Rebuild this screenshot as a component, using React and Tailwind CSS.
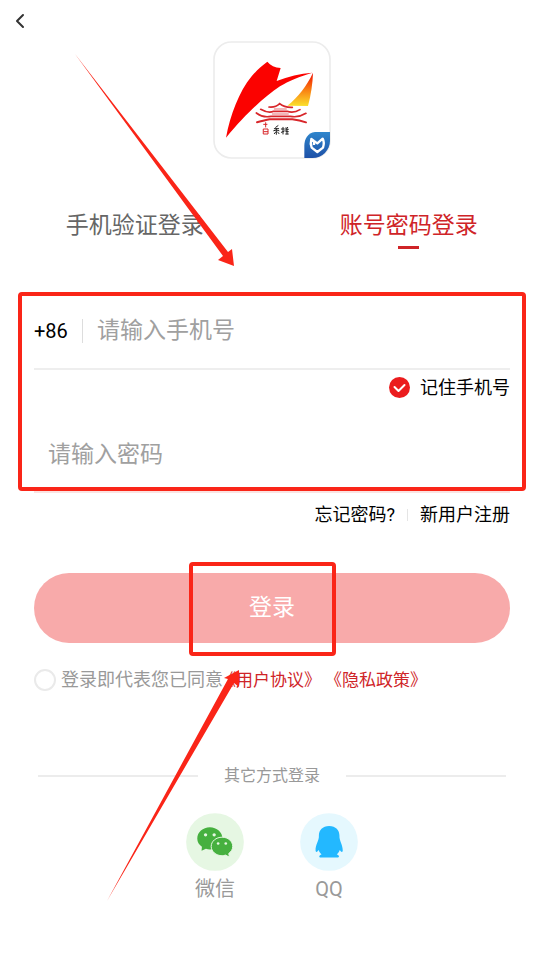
import { ChevronLeft } from "lucide-react";

function AppLogo() {
  return (
    <svg viewBox="24 18 354 354" className="mx-auto block size-[118px]" role="img" aria-label="App logo">
      <defs>
        <linearGradient id="flame" x1="0" y1="0" x2="0" y2="1">
          <stop offset="0" stopColor="#f00a00" />
          <stop offset="0.5" stopColor="#f97c12" />
          <stop offset="1" stopColor="#fbe02c" />
        </linearGradient>
        <linearGradient id="badge" x1="0" y1="0" x2="0" y2="1">
          <stop offset="0" stopColor="#2f86cc" />
          <stop offset="1" stopColor="#1d4fa6" />
        </linearGradient>
        <clipPath id="tile">
          <rect x="27" y="21" width="348" height="348" rx="52" />
        </clipPath>
      </defs>
      <rect x="27" y="21" width="348" height="348" rx="52" fill="#fff" stroke="#ececec" strokeWidth="5" />
      <path d="M63 308C76 240 102 170 140 124C155 106 170 92 187 80C196 91 210 98 227 99L215 138C250 124 285 116 322 113C285 124 250 138 225 154C180 184 128 230 63 308Z" fill="#fb0200" />
      <path d="M324 113C323 145 318 180 309 213L247 212C280 186 305 153 324 113Z" fill="url(#flame)" />
      <g fill="none" stroke="#d8262a" strokeLinecap="round">
        <path d="M192 216Q212 218 224 206Q238 218 262 217" strokeWidth="5" />
        <path d="M167 223Q190 236 206 229H246Q266 236 285 224" strokeWidth="5" />
        <path d="M154 234Q174 249 198 244H256Q280 249 303 235" strokeWidth="5" />
        <path d="M156 262Q180 256 194 253H262Q284 256 303 262" strokeWidth="6" />
        <path d="M208 222H244M202 237H250" strokeWidth="2" />
        <path d="M176 268H186M182 263V276M176 282H189V297H176ZM177 290H188" strokeWidth="3" />
      </g>
      <g fill="none" stroke="#222" strokeWidth="3" strokeLinecap="round">
        <path d="M212 277L219 272M208 281H221M206 287Q214 282 222 287M214 281V298M208 296L212 291M218 291L222 296" />
        <path d="M229 282H238M234 277V297M229 292L238 288M243 278V288M248 277L244 283H250M243 290H250M246 284V297M242 297H250" />
      </g>
      <g clipPath="url(#tile)">
        <path d="M375 291H330C308 294 298 312 298 332V371H375Z" fill="url(#badge)" />
      </g>
      <path d="M327 318L319 312Q315 326 320 338L337 351L354 338Q359 322 353 311L337 325L327 318V330" fill="none" stroke="#fff" strokeWidth="7" strokeLinejoin="round" />
    </svg>
  );
}

function WechatIcon() {
  return (
    <svg viewBox="48 188 175 175" className="size-[58px]" aria-hidden="true">
      <circle cx="135.500" cy="275.500" r="87" fill="#e6f7e3" />
      <path d="M120 231C99 231 82 246 82 265C82 275 87 284 96 290L95 302L108 296Q114 298 120 298C141 298 158 283 158 265C158 246 141 231 120 231Z" fill="#46b03f" />
      <path d="M157 261C175 261 189 273 189 289C189 298 184 305 177 310L179 321L167 315Q162 317 157 317C139 317 124 304 124 289C124 273 139 261 157 261Z" fill="#46b03f" stroke="#e6f7e3" strokeWidth="3" />
      <g fill="#e6f7e3">
        <circle cx="107" cy="254" r="5" />
        <circle cx="133" cy="254" r="5" />
        <circle cx="145" cy="280" r="4" />
        <circle cx="168" cy="280" r="4" />
      </g>
    </svg>
  );
}

function QqIcon() {
  return (
    <svg viewBox="389 188 175 175" className="size-[58px]" aria-hidden="true">
      <circle cx="476.500" cy="275.500" r="87" fill="#e5f8fe" />
      <path d="M477 227C457 227 446 240 446 256C447 272 435 283 436 302Q438 310 445 300Q447 308 454 313C446 315 445 322 451 322H502C509 322 508 315 500 313Q507 308 509 300Q516 310 518 302C518 283 507 272 508 256C508 240 497 227 477 227Z" fill="#23b8ff" />
    </svg>
  );
}

function Arrows() {
  return (
    <svg viewBox="0 0 545 955" className="pointer-events-none absolute top-0 left-0 w-full" fill="#fa2518" aria-hidden="true">
      <path d="M75 54L228 252L232 249L234 266L218 260L223 256Z" />
      <path d="M107 901L228 679L224 678L239 670L239 687L234 683Z" />
    </svg>
  );
}

export default function App() {
  return (
    <main className="relative min-h-screen bg-white pr-[35px] pb-10 pl-[34px] font-['Roboto','Noto_Sans_CJK_SC',sans-serif] text-[18px] leading-6 text-black">
      <header className="-ml-7 flex h-[41px] items-center">
        <button type="button" aria-label="返回" className="flex size-7 items-center justify-center text-[#333]">
          <ChevronLeft size={24} strokeWidth={2} />
        </button>
      </header>
      <AppLogo />

      <nav className="-mr-[35px] -ml-[34px] mt-[49px] grid grid-cols-2 text-[23px] leading-9">
        <button type="button" className="pr-[3px] pb-2 text-[#666]">手机验证登录</button>
        <button type="button" className="flex flex-col items-center text-[#cf2428]">
          账号密码登录
          <span className="mt-[2px] h-[3px] w-[21px] bg-[#cf2428]" />
        </button>
      </nav>

      <form onSubmit={(e) => e.preventDefault()}>
        <section className="relative -mx-4 mt-10 px-4">
          <div className="flex h-[78px] items-center border-b-2 border-[#eee] pt-[2px]">
            <label htmlFor="phone" className="w-12 text-[20px]">+86</label>
            <span className="h-6 w-px bg-[#ddd]" />
            <input id="phone" type="tel" placeholder="请输入手机号" className="ml-[14px] min-w-0 flex-1 text-[23px] leading-9 outline-none placeholder:text-[#a0a0a0]" />
          </div>
          <label className="flex h-[35px] items-center justify-end gap-[10px]">
            <span className="grid">
              <input type="checkbox" defaultChecked className="col-start-1 row-start-1 size-[21px] appearance-none rounded-full bg-[#eb1c1e]" />
              <svg viewBox="0 0 21 21" className="pointer-events-none col-start-1 row-start-1 size-[21px]" fill="none" stroke="#fff" strokeWidth="2" strokeLinecap="round" strokeLinejoin="round">
                <path d="M5.500 10L9.500 14L15.500 8" />
              </svg>
            </span>
            记住手机号
          </label>
          <div className="flex h-[88px] items-center border-b-2 border-[#fbe3e1] pt-[14px]">
            <input type="password" aria-label="密码" placeholder="请输入密码" className="ml-[14px] min-w-0 flex-1 text-[23px] leading-9 outline-none placeholder:text-[#a0a0a0]" />
          </div>
          <div className="pointer-events-none absolute inset-x-0 top-0 bottom-[2px] rounded border-4 border-[#fa2518]" />
        </section>

        <div className="mt-[10px] flex items-center justify-end">
          <a href="#forgot">忘记密码?</a>
          <span className="mx-3 h-3 w-px bg-[#e5e5e5]" />
          <a href="#register">新用户注册</a>
        </div>

        <div className="relative mt-[46px]">
          <button type="submit" className="block h-[70px] w-full rounded-full bg-[#f8aaaa] text-[23px] text-white">登录</button>
          <div className="pointer-events-none absolute -top-[11px] -bottom-[13px] left-1/2 w-[147px] -translate-x-[83px] rounded border-4 border-[#fa2518]" />
        </div>

        <div className="mt-[25px] flex items-center">
          <input id="agree" type="checkbox" className="mr-[5px] size-[22px] appearance-none rounded-full border-2 border-[#eaeaea]" />
          <label htmlFor="agree" className="text-[#999]">登录即代表您已同意</label>
          <span className="-ml-1 flex gap-1 text-[17px] text-[#cf2428]">
            <a href="#terms">《用户协议》</a>
            <a href="#privacy">《隐私政策》</a>
          </span>
        </div>
      </form>

      <div className="mx-1 mt-[72px] flex items-center text-[16px] text-[#999]">
        <span className="h-[2px] flex-1 bg-[#ececec]" />
        <span className="mx-[26px]">其它方式登录</span>
        <span className="h-[2px] flex-1 bg-[#ececec]" />
      </div>

      <div className="mt-[25px] flex justify-center gap-14 text-[20px] leading-9 text-[#999]">
        <button type="button" className="flex flex-col items-center"><WechatIcon />微信</button>
        <button type="button" className="flex flex-col items-center"><QqIcon />QQ</button>
      </div>
      <Arrows />
    </main>
  );
}
